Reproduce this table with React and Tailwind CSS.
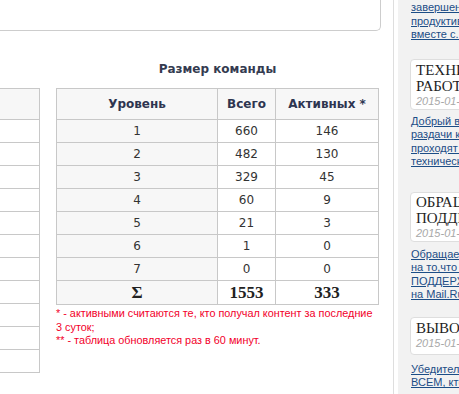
const levels = [
    [1, 660, 146],
    [2, 482, 130],
    [3, 329, 45],
    [4, 60, 9],
    [5, 21, 3],
    [6, 1, 0],
    [7, 0, 0],
];

const sans = 'font-["DejaVu_Sans",sans-serif]';
const small = 'font-["Liberation_Sans",Arial,sans-serif]';
const serif = 'font-["Liberation_Serif","Times_New_Roman",serif]';

function NewsCard({ lines, date, className = '' }) {
    return (
        <div className={`-ml-px w-[220px] rounded-[4px] border border-[#dedede] bg-white pl-[5px] ${className}`}>
            <div className={`${serif} text-[15px] leading-[16px] whitespace-nowrap text-[#1f1f1f]`}>
                {lines.map((l) => (
                    <div key={l}>{l}</div>
                ))}
            </div>
            <div className={`${small} mt-[1px] text-[11px] leading-[13px] italic text-[#a8a8a8]`}>{date}</div>
        </div>
    );
}

function Excerpt({ lines, className = '' }) {
    return (
        <div className={`${small} text-[11px] leading-[13.5px] whitespace-nowrap text-[#1c4d86] ${className}`}>
            {lines.map((l) => (
                <div key={l}>
                    <a className="underline underline-offset-[1px]">{l}</a>
                </div>
            ))}
        </div>
    );
}

export default function App() {
    return (
        <div className="flex h-[394px] w-[459px] overflow-hidden bg-white">
            <main className="w-[394px] shrink-0 border-r border-[#dedede]">
                <div className="h-[31px] w-[381px] rounded-br-[5px] border-b border-r border-[#cdcdcd]" />

                <div className="flex items-start gap-[16px]">
                    {/* левая таблица, обрезана краем */}
                    <div className="mt-[57px] w-[40px] border-t border-r border-[#c8c8c8]">
                        <div className="h-[31px] border-b border-[#c8c8c8] bg-[#f7f7f7]" />
                        {Array.from({ length: 11 }).map((_, i) => (
                            <div key={i} className="h-[23px] border-b border-[#c8c8c8]" />
                        ))}
                    </div>

                    <div className="w-[323px]">
                        <h3 className={`${sans} mt-[30px] mb-[11px] text-center text-[12px] leading-[16px] font-bold text-[#343b50]`}>
                            Размер команды
                        </h3>
                        <div className={`${sans} border-t border-l border-[#c8c8c8] text-[12px] text-[#333]`}>
                            <div className="flex h-[31px] border-b border-[#c8c8c8] bg-[#f7f7f7] font-bold text-[#2e3550]">
                                <div className="flex w-[161px] items-center justify-center border-r border-[#c8c8c8]">Уровень</div>
                                <div className="flex w-[58px] items-center justify-center border-r border-[#c8c8c8]">Всего</div>
                                <div className="flex w-[103px] items-center justify-center border-r border-[#c8c8c8]">Активных *</div>
                            </div>
                            {levels.map(([lvl, total, active]) => (
                                <div key={lvl} className="flex h-[23px] border-b border-[#c8c8c8]">
                                    <div className="flex w-[161px] items-center justify-center border-r border-[#c8c8c8] bg-[#f7f7f7]">{lvl}</div>
                                    <div className="flex w-[58px] items-center justify-center border-r border-[#c8c8c8]">{total}</div>
                                    <div className="flex w-[103px] items-center justify-center border-r border-[#c8c8c8]">{active}</div>
                                </div>
                            ))}
                            <div className={`${serif} flex h-[24px] border-b border-[#c8c8c8] text-[17px] font-bold text-[#222]`}>
                                <div className="flex w-[161px] items-center justify-center border-r border-[#c8c8c8] bg-[#f7f7f7]">Σ</div>
                                <div className="flex w-[58px] items-center justify-center border-r border-[#c8c8c8]">1553</div>
                                <div className="flex w-[103px] items-center justify-center border-r border-[#c8c8c8]">333</div>
                            </div>
                        </div>
                        <p className={`${small} mt-[2px] text-[10.85px] leading-[13.5px] text-[#f2002a]`}>
                            * - активными считаются те, кто получал контент за последние
                            <br />3 суток;
                            <br />** - таблица обновляется раз в 60 минут.
                        </p>
                    </div>
                </div>
            </main>

            <aside className="w-[240px] shrink-0 pl-[4px]">
                <div className="h-full bg-[#f2f2f2] pl-[13px]">
                    <Excerpt
                        className="pt-[1px]"
                        lines={['завершены работы по', 'продуктивности сервиса', 'вместе с. командой']}
                    />
                    <NewsCard className="mt-[17px] h-[51px] pt-[2px]" lines={['ТЕХНИЧЕСКИЕ', 'РАБОТЫ']} date="2015-01-28" />
                    <Excerpt
                        className="mt-[5px]"
                        lines={['Добрый вечер! Сервера', 'раздачи контента', 'проходят плановые', 'технические работы.']}
                    />
                    <NewsCard className="mt-[23px] h-[50px] pt-[1px]" lines={['ОБРАЩЕНИЕ В', 'ПОДДЕРЖКУ']} date="2015-01-26" />
                    <Excerpt
                        className="mt-[6px]"
                        lines={['Обращаем внимание', 'на то,что служба', 'ПОДДЕРЖКИ работает', 'на Mail.Ru']}
                    />
                    <NewsCard className="mt-[15px] h-[38px] pt-[2px]" lines={['ВЫВОД СРЕДСТВ']} date="2015-01-20" />
                    <Excerpt className="mt-[8px]" lines={['Убедительная просьба', 'ВСЕМ, кто выводит', 'средства']} />
                </div>
            </aside>
        </div>
    );
}
